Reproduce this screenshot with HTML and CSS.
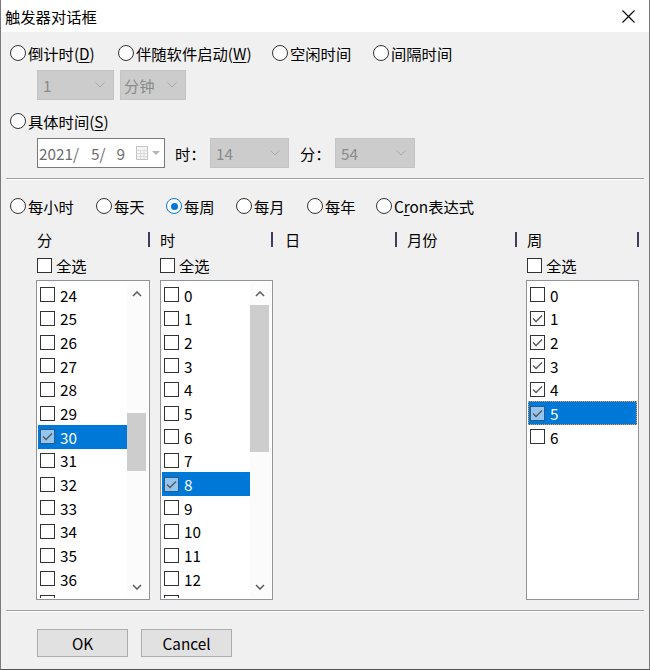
FILE: index.html
```html
<!DOCTYPE html>
<html>
<head>
<meta charset="utf-8">
<link rel="stylesheet" href="styles.css">
</head>
<body>
<div class="window">
  <div class="titlebar">
    <span class="title">触发器对话框</span>
    <svg class="close" width="13" height="13" viewBox="0 0 13 13"><path d="M0.5 0.5L12.5 12.5M12.5 0.5L0.5 12.5" stroke="#000" stroke-width="1.1" fill="none"/></svg>
  </div>
  <div class="content">
    <div class="opt-row row-top">
      <label class="opt w108"><span class="radio"></span><span>倒计时(<u>D</u>)</span></label>
      <label class="opt w154"><span class="radio"></span><span>伴随软件启动(<u>W</u>)</span></label>
      <label class="opt w101"><span class="radio"></span><span>空闲时间</span></label>
      <label class="opt"><span class="radio"></span><span>间隔时间</span></label>
    </div>
    <div class="field-row row-combos">
      <div class="combo c77"><span>1</span><svg class="chev" width="10" height="6" viewBox="0 0 10 6"><path d="M0.5 0.5L5 5L9.5 0.5" stroke="#a8a8a8" fill="none"/></svg></div>
      <div class="combo c66"><span>分钟</span><svg class="chev" width="10" height="6" viewBox="0 0 10 6"><path d="M0.5 0.5L5 5L9.5 0.5" stroke="#a8a8a8" fill="none"/></svg></div>
    </div>
    <div class="opt-row row-specific">
      <label class="opt"><span class="radio"></span><span>具体时间(<u>S</u>)</span></label>
    </div>
    <div class="field-row row-date">
      <div class="datebox">
        <span class="dpart">2021/</span><span class="dpart d2">5/</span><span class="dpart d3">9</span>
        <svg class="cal" width="26" height="14" viewBox="0 0 26 14"><rect x="0.5" y="0.5" width="11" height="13" fill="#f4f4f4" stroke="#c6c6c6"/><path d="M1 4.5H11M1 7.5H11M1 10.5H11M4.5 4V13M8 4V13" stroke="#dcdcdc"/><path d="M16 5H24L20 9Z" fill="#b4b4b4"/></svg>
      </div>
      <span class="flabel">时：</span>
      <div class="combo c79"><span>14</span><svg class="chev" width="10" height="6" viewBox="0 0 10 6"><path d="M0.5 0.5L5 5L9.5 0.5" stroke="#a8a8a8" fill="none"/></svg></div>
      <span class="flabel l2">分：</span>
      <div class="combo c80"><span>54</span><svg class="chev" width="10" height="6" viewBox="0 0 10 6"><path d="M0.5 0.5L5 5L9.5 0.5" stroke="#a8a8a8" fill="none"/></svg></div>
    </div>
    <div class="sep sep-1"></div>
    <div class="opt-row row-period">
      <label class="opt w86"><span class="radio"></span><span>每小时</span></label>
      <label class="opt w70"><span class="radio"></span><span>每天</span></label>
      <label class="opt w70"><span class="radio on"></span><span>每周</span></label>
      <label class="opt w71"><span class="radio"></span><span>每月</span></label>
      <label class="opt w69"><span class="radio"></span><span>每年</span></label>
      <label class="opt"><span class="radio"></span><span>C<u>r</u>on表达式</span></label>
    </div>
    <div class="header">
      <div class="hcell h1"><span>分</span><span class="hsep"></span></div>
      <div class="hcell h2"><span>时</span><span class="hsep"></span></div>
      <div class="hcell h3"><span>日</span><span class="hsep"></span></div>
      <div class="hcell h4"><span>月份</span><span class="hsep"></span></div>
      <div class="hcell h5"><span>周</span><span class="hsep"></span></div>
    </div>
    <div class="allrow">
      <label class="all a1"><span class="cb"></span><span>全选</span></label>
      <label class="all a2"><span class="cb"></span><span>全选</span></label>
      <label class="all"><span class="cb"></span><span>全选</span></label>
    </div>
    <div class="lists">
      <div class="list l-min">
        <div class="items">
          <div class="item"><span class="cb"></span><span>24</span></div>
          <div class="item"><span class="cb"></span><span>25</span></div>
          <div class="item"><span class="cb"></span><span>26</span></div>
          <div class="item"><span class="cb"></span><span>27</span></div>
          <div class="item"><span class="cb"></span><span>28</span></div>
          <div class="item"><span class="cb"></span><span>29</span></div>
          <div class="item sel"><span class="cb on"><svg width="13" height="13" viewBox="0 0 13 13"><path d="M2 6.5L5 9.5L11 3.5" stroke="#555" stroke-width="1.3" fill="none"/></svg></span><span>30</span></div>
          <div class="item"><span class="cb"></span><span>31</span></div>
          <div class="item"><span class="cb"></span><span>32</span></div>
          <div class="item"><span class="cb"></span><span>33</span></div>
          <div class="item"><span class="cb"></span><span>34</span></div>
          <div class="item"><span class="cb"></span><span>35</span></div>
          <div class="item"><span class="cb"></span><span>36</span></div>
          <div class="item"><span class="cb"></span></div>
        </div>
        <div class="scroll">
          <div class="sb-btn"><svg width="10" height="6" viewBox="0 0 10 6"><path d="M1 5L5 1L9 5" stroke="#606060" stroke-width="1.6" fill="none"/></svg></div>
          <div class="track"><div class="thumb" style="margin-top:108px;height:58px"></div></div>
          <div class="sb-btn"><svg width="10" height="6" viewBox="0 0 10 6"><path d="M1 1L5 5L9 1" stroke="#606060" stroke-width="1.6" fill="none"/></svg></div>
        </div>
      </div>
      <div class="list l-hour">
        <div class="items">
          <div class="item"><span class="cb"></span><span>0</span></div>
          <div class="item"><span class="cb"></span><span>1</span></div>
          <div class="item"><span class="cb"></span><span>2</span></div>
          <div class="item"><span class="cb"></span><span>3</span></div>
          <div class="item"><span class="cb"></span><span>4</span></div>
          <div class="item"><span class="cb"></span><span>5</span></div>
          <div class="item"><span class="cb"></span><span>6</span></div>
          <div class="item"><span class="cb"></span><span>7</span></div>
          <div class="item sel"><span class="cb on"><svg width="13" height="13" viewBox="0 0 13 13"><path d="M2 6.5L5 9.5L11 3.5" stroke="#555" stroke-width="1.3" fill="none"/></svg></span><span>8</span></div>
          <div class="item"><span class="cb"></span><span>9</span></div>
          <div class="item"><span class="cb"></span><span>10</span></div>
          <div class="item"><span class="cb"></span><span>11</span></div>
          <div class="item"><span class="cb"></span><span>12</span></div>
          <div class="item"><span class="cb"></span></div>
        </div>
        <div class="scroll">
          <div class="sb-btn"><svg width="10" height="6" viewBox="0 0 10 6"><path d="M1 5L5 1L9 5" stroke="#606060" stroke-width="1.6" fill="none"/></svg></div>
          <div class="track"><div class="thumb" style="margin-top:0px;height:147px"></div></div>
          <div class="sb-btn"><svg width="10" height="6" viewBox="0 0 10 6"><path d="M1 1L5 5L9 1" stroke="#606060" stroke-width="1.6" fill="none"/></svg></div>
        </div>
      </div>
      <div class="list l-week">
        <div class="items">
          <div class="item"><span class="cb"></span><span>0</span></div>
          <div class="item"><span class="cb"><svg width="13" height="13" viewBox="0 0 13 13"><path d="M2 6.5L5 9.5L11 3.5" stroke="#555" stroke-width="1.3" fill="none"/></svg></span><span>1</span></div>
          <div class="item"><span class="cb"><svg width="13" height="13" viewBox="0 0 13 13"><path d="M2 6.5L5 9.5L11 3.5" stroke="#555" stroke-width="1.3" fill="none"/></svg></span><span>2</span></div>
          <div class="item"><span class="cb"><svg width="13" height="13" viewBox="0 0 13 13"><path d="M2 6.5L5 9.5L11 3.5" stroke="#555" stroke-width="1.3" fill="none"/></svg></span><span>3</span></div>
          <div class="item"><span class="cb"><svg width="13" height="13" viewBox="0 0 13 13"><path d="M2 6.5L5 9.5L11 3.5" stroke="#555" stroke-width="1.3" fill="none"/></svg></span><span>4</span></div>
          <div class="item sel focus"><span class="cb on"><svg width="13" height="13" viewBox="0 0 13 13"><path d="M2 6.5L5 9.5L11 3.5" stroke="#555" stroke-width="1.3" fill="none"/></svg></span><span>5</span></div>
          <div class="item"><span class="cb"></span><span>6</span></div>
        </div>
      </div>
    </div>
    <div class="sep sep-2"></div>
    <div class="buttons">
      <button class="btn">OK</button>
      <button class="btn">Cancel</button>
    </div>
  </div>
</div>
</body>
</html>
```

FILE: styles.css
```css
* { box-sizing: border-box; }
html, body { margin: 0; padding: 0; }
body {
  width: 650px;
  height: 670px;
  overflow: hidden;
  background: #f0f0f0;
  font-family: "Noto Sans CJK SC", "Microsoft YaHei", sans-serif;
  font-size: 15.3px;
  line-height: 20px;
  color: #000;
}
.window {
  width: 650px;
  height: 670px;
  border: 1px solid #7a7a7a;
  border-top: none;
  border-bottom-color: #505050;
  background: #f0f0f0;
  display: flex;
  flex-direction: column;
}
.titlebar {
  height: 32px;
  flex-shrink: 0;
  background: #fff;
  display: flex;
  align-items: center;
  justify-content: space-between;
  padding: 0 14px 1px 4px;
}
.title { font-size: 15.3px; }
.close { display: block; margin-top: 2px; }

.content {
  display: flex;
  flex-direction: column;
  padding: 0 5px 0 9px;
}
.opt-row { display: flex; align-items: center; height: 20px; }
.row-top { margin-top: 11px; }
.row-specific { margin-top: 11px; }
.row-period { margin-top: 16px; }
.opt { display: flex; align-items: center; white-space: nowrap; }
.w108 { width: 108px; }
.w154 { width: 154px; }
.w101 { width: 101px; }
.w86 { width: 86px; }
.w70 { width: 70px; }
.w71 { width: 71px; }
.w69 { width: 69px; }
u { text-decoration-thickness: 1px; text-underline-offset: 2px; }

.radio {
  width: 16px;
  height: 16px;
  border: 1px solid #333;
  border-radius: 50%;
  background: #fff;
  margin-right: 2px;
  flex-shrink: 0;
  position: relative;
}
.radio.on { border-color: #0078d7; }
.radio.on::after {
  content: "";
  position: absolute;
  left: 3.5px; top: 3.5px;
  width: 7px; height: 7px;
  border-radius: 50%;
  background: #0078d7;
}

.field-row { display: flex; align-items: center; height: 30px; margin-left: 27px; }
.row-combos { margin-top: 7px; gap: 6px; }
.row-date { margin-top: 7px; }
.combo {
  height: 30px;
  background: #cccccc;
  border: 1px solid #c4c4c4;
  color: #8a8a8a;
  display: flex;
  align-items: center;
  justify-content: space-between;
  padding: 0 8px 0 5px;
}
.c77 { width: 77px; }
.c66 { width: 66px; padding-left: 3px; }
.c79 { width: 79px; }
.c80 { width: 80px; }
.chev { display: block; }

.datebox {
  width: 128px;
  height: 30px;
  background: #fff;
  border: 1px solid #7a7a7a;
  display: flex;
  align-items: center;
  padding-left: 1px;
  color: #6d6d6d;
  margin-right: 10px;
}
.dpart { display: inline-block; }
.d2 { margin-left: 12px; }
.d3 { margin-left: 11px; }
.cal { margin-left: 11px; display: block; }
.flabel { width: 35px; flex-shrink: 0; }
.l2 { margin-left: 11px; }

.sep {
  height: 2px;
  border-top: 1px solid #a0a0a0;
  border-bottom: 1px solid #fff;
  margin-left: -4px;
}
.sep-1 { margin-top: 10px; }
.sep-2 { margin-top: 10px; }

.header { display: flex; height: 17px; margin-top: 14px; margin-left: 27px; align-items: center; }
.hcell { display: flex; justify-content: space-between; align-items: center; height: 17px; }
.hsep { width: 2px; height: 15px; background: #46385e; margin-top: 1px; }
.h1 { width: 113px; }
.h2 { width: 123px; padding-left: 10px; }
.h3 { width: 124px; padding-left: 12px; }
.h4 { width: 120px; padding-left: 10px; }
.h5 { width: 122px; padding-left: 10px; }

.allrow { display: flex; height: 16px; margin-top: 10px; margin-left: 27px; align-items: center; }
.all { display: flex; align-items: center; gap: 4px; }
.a1 { width: 123px; }
.a2 { width: 367px; }

.cb {
  width: 15px;
  height: 15px;
  border: 1px solid #333;
  background: #fff;
  flex-shrink: 0;
  display: flex;
  align-items: center;
  justify-content: center;
}
.cb svg { display: block; }
.cb.on { background: #94c5ef; border-color: #2d5a86; }

.lists { display: flex; height: 320px; margin-top: 7px; margin-left: 26px; }
.list {
  height: 320px;
  background: #fff;
  border: 1px solid #8f949b;
  padding: 1px;
  display: flex;
}
.l-min { width: 114px; }
.l-hour { width: 113px; margin-left: 10px; }
.l-week { width: 113px; margin-left: 253px; }
.items { flex: 1; overflow: hidden; padding-top: 1px; }
.item {
  height: 23.67px;
  display: flex;
  align-items: center;
  gap: 5px;
  padding-left: 2px;
  white-space: nowrap;
}
.item.sel { background: #0078d7; color: #fff; }
.item.focus { outline: 1px dotted #ff9a40; outline-offset: -1px; }

.scroll { width: 21px; display: flex; flex-direction: column; background: #fbfbfb; }
.sb-btn { height: 23px; display: flex; align-items: center; justify-content: center; padding-right: 2px; }
.sb-btn svg { display: block; }
.track { flex: 1; }
.thumb { width: 19px; background: #cdcdcd; }

.buttons { display: flex; gap: 13px; margin-top: 17px; margin-left: 27px; }
.btn {
  width: 91px;
  height: 28px;
  background: #e1e1e1;
  border: 1px solid #adadad;
  font-family: inherit;
  font-size: 15.3px;
  color: #000;
  padding: 0;
  line-height: 20px;
}
```
